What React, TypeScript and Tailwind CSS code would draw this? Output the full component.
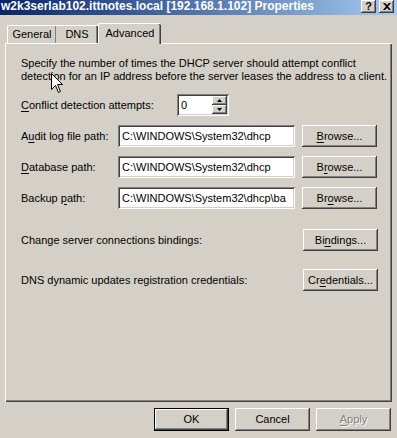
import React from "react";

const raised =
  "shadow-[inset_-1px_-1px_#404040,inset_1px_1px_#ffffff,inset_-2px_-2px_#808080,inset_2px_2px_#d4d0c8]";
const sunken =
  "shadow-[inset_1px_1px_#808080,inset_-1px_-1px_#ffffff,inset_2px_2px_#404040,inset_-2px_-2px_#d4d0c8]";

function U({ children }: { children: React.ReactNode }) {
  return <span className="underline underline-offset-[2px]">{children}</span>;
}

function Btn({
  children,
  className = "",
  disabled = false,
}: {
  children: React.ReactNode;
  className?: string;
  disabled?: boolean;
}) {
  return (
    <div
      className={`flex items-center justify-center bg-[#d4d0c8] ${raised} ${
        disabled ? "text-[#808080] [text-shadow:1px_1px_#ffffff]" : "text-black"
      } ${className}`}
    >
      {children}
    </div>
  );
}

function Field({ value, className = "" }: { value: string; className?: string }) {
  return (
    <div
      className={`flex items-center bg-white pl-[4px] overflow-hidden whitespace-nowrap ${sunken} ${className}`}
    >
      {value}
    </div>
  );
}

function PathRow({
  label,
  value,
  browse,
  className = "",
}: {
  label: React.ReactNode;
  value: string;
  browse: React.ReactNode;
  className?: string;
}) {
  return (
    <div className={`flex items-center h-[22px] ${className}`}>
      <div className="w-[97px]">{label}</div>
      <Field value={value} className="w-[177px] h-[22px]" />
      <Btn className="ml-[7px] w-[75px] h-[22px]">{browse}</Btn>
    </div>
  );
}

export default function App() {
  return (
    <div className="relative w-[397px] h-[438px] overflow-hidden bg-[#d4d0c8] font-['Liberation_Sans',Arial,sans-serif] text-[11px] leading-[13px] text-black">
      {/* title bar */}
      <div className="flex items-start justify-between h-[15px] bg-gradient-to-r from-[#0a246a] to-[#a6caf0] pl-[1px] pr-[3px]">
        <div className="text-white font-bold text-[12px] leading-[13px] whitespace-nowrap">
          w2k3serlab102.ittnotes.local [192.168.1.102] Properties
        </div>
        <div className="flex gap-[3px]">
          <Btn className="w-[15px] h-[13px] font-bold text-[11px]">?</Btn>
          <Btn className="w-[15px] h-[13px]">
            <svg width="8" height="7" viewBox="0 0 8 7">
              <path d="M0 0h2l2 2 2-2h2L5 3.5 8 7H6L4 5 2 7H0l3-3.5z" fill="#000" />
            </svg>
          </Btn>
        </div>
      </div>

      {/* tabs */}
      <div className="flex items-end h-[28px] pl-[7px]">
        <div className="flex items-center justify-center w-[49px] h-[18px] border-l border-t border-white rounded-tl-[2px] shadow-[inset_-1px_0_#808080]">
          General
        </div>
        <div className="flex items-center justify-center w-[42px] h-[18px] border-t border-white shadow-[inset_-1px_0_#404040,inset_-2px_0_#808080]">
          DNS
        </div>
        <div className="relative z-10 -mb-px flex items-center justify-center w-[63px] h-[21px] pb-[2px] bg-[#d4d0c8] border-l border-t border-white rounded-t-[2px] shadow-[inset_-1px_0_#404040,inset_-2px_0_#808080]">
          Advanced
        </div>
      </div>

      {/* panel */}
      <div className="ml-[5px] w-[387px] h-[359px] border-l border-t border-white shadow-[inset_-1px_-1px_#404040,inset_-2px_-2px_#808080] pl-[15px] pt-[13px]">
        <p>
          Specify the number of times the DHCP server should attempt conflict
          <br />
          detection for an IP address before the server leases the address to a client.
        </p>

        <div className="flex items-center h-[22px] mt-[11px]">
          <div className="w-[156px]">
            <U>C</U>onflict detection attempts:
          </div>
          <div className={`flex items-center w-[52px] h-[22px] bg-white pl-[4px] ${sunken}`}>
            <span className="flex-1">0</span>
            <div className="flex flex-col mr-[2px] my-[2px]">
              <Btn className="w-[15px] h-[9px]">
                <svg width="5" height="3" viewBox="0 0 5 3">
                  <path d="M2.5 0L5 3H0z" fill="#000" />
                </svg>
              </Btn>
              <Btn className="w-[15px] h-[9px]">
                <svg width="5" height="3" viewBox="0 0 5 3">
                  <path d="M0 0h5L2.5 3z" fill="#000" />
                </svg>
              </Btn>
            </div>
          </div>
        </div>

        <PathRow
          className="mt-[9px]"
          label={
            <>
              A<U>u</U>dit log file path:
            </>
          }
          value="C:\WINDOWS\System32\dhcp"
          browse={
            <>
              <U>B</U>rowse...
            </>
          }
        />
        <PathRow
          className="mt-[9px]"
          label={
            <>
              <U>D</U>atabase path:
            </>
          }
          value="C:\WINDOWS\System32\dhcp"
          browse={
            <>
              B<U>r</U>owse...
            </>
          }
        />
        <PathRow
          className="mt-[9px]"
          label={
            <>
              Backup <U>p</U>ath:
            </>
          }
          value="C:\WINDOWS\System32\dhcp\ba"
          browse={
            <>
              Br<U>o</U>wse...
            </>
          }
        />

        <div className="flex items-center justify-between h-[22px] mt-[20px] pr-[14px]">
          <span>Change server connections bindings:</span>
          <Btn className="w-[75px] h-[22px]">
            <>
              Bi<U>n</U>dings...
            </>
          </Btn>
        </div>
        <div className="flex items-center justify-between h-[22px] mt-[18px] pr-[14px]">
          <span>DNS dynamic updates registration credentials:</span>
          <Btn className="w-[75px] h-[22px]">
            <>
              Cr<U>e</U>dentials...
            </>
          </Btn>
        </div>
      </div>

      {/* bottom buttons */}
      <div className="flex justify-end gap-[6px] pr-[6px] mt-[6px]">
        <div className="border border-black">
          <Btn className="w-[73px] h-[21px]">OK</Btn>
        </div>
        <Btn className="w-[75px] h-[23px]">Cancel</Btn>
        <Btn className="w-[75px] h-[23px]" disabled>
          <>
            <U>A</U>pply
          </>
        </Btn>
      </div>

      {/* mouse pointer */}
      <svg
        className="absolute left-[51px] top-[73px]"
        width="13"
        height="21"
        viewBox="0 0 13 21"
      >
        <path
          d="M0.5 0.5V16.5L4.5 12.5L7.5 19.5L9.5 18.5L6.5 11.5H11.5Z"
          fill="#ffffff"
          stroke="#000000"
          strokeWidth="1"
        />
      </svg>
    </div>
  );
}
